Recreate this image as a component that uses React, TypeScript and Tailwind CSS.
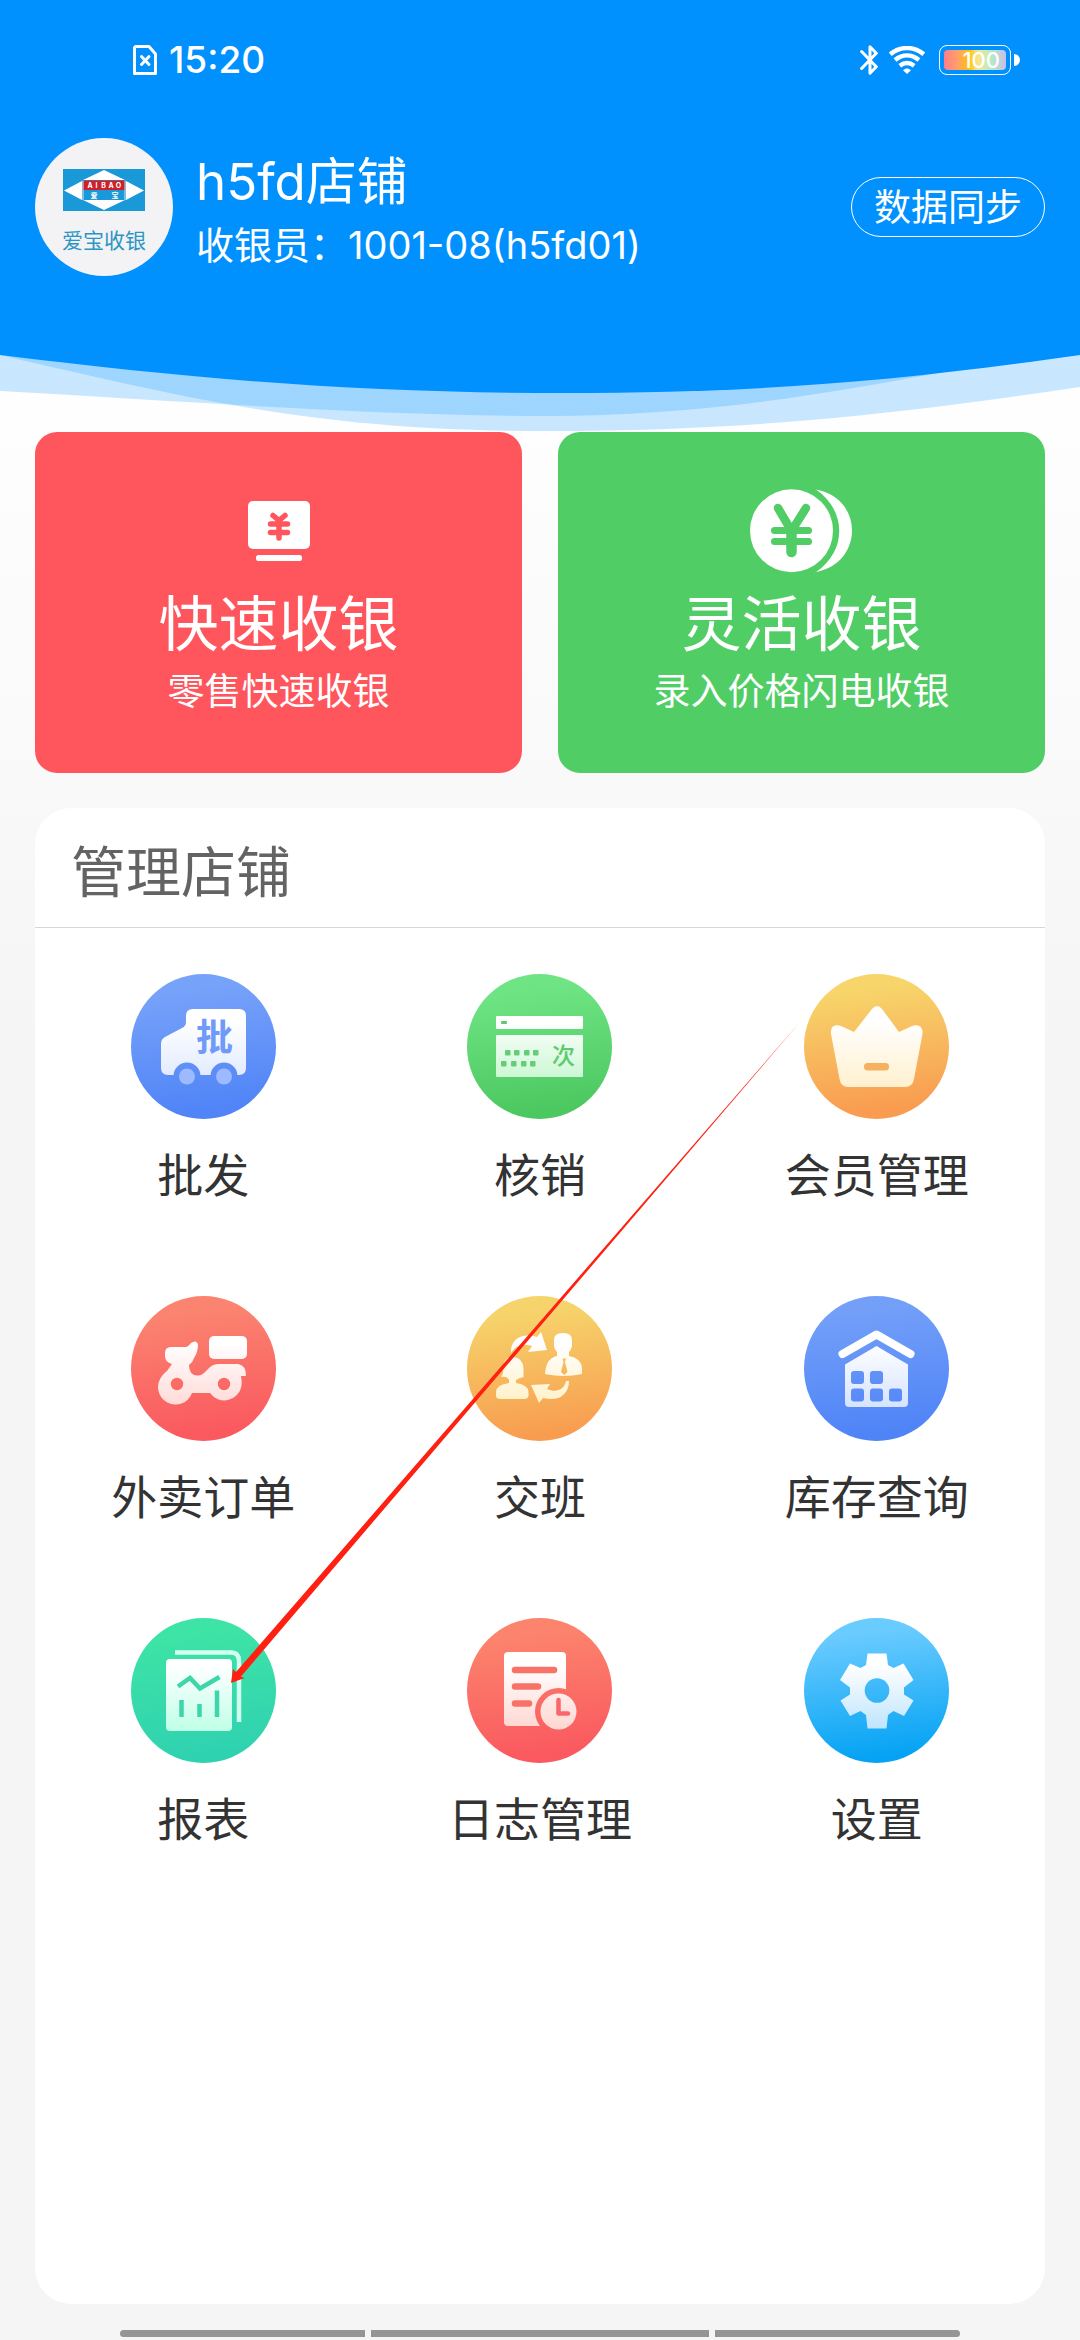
import React, { useId } from "react";

function SimIcon() {
  return (
    <svg viewBox="0 0 24 30" className="h-[30px] w-6" fill="none" stroke="#fff" strokeWidth="3" aria-hidden="true">
      <path d="M2.5 1.5H16L22.5 9V28.5H1.5V2.5Z" strokeLinejoin="round" />
      <path d="M8.5 11.5L16 19.500M16 11.500L8.500 19.500" strokeLinecap="round" />
    </svg>
  );
}

function BluetoothIcon() {
  return (
    <svg viewBox="0 0 18 30" className="h-[30px] w-[18px]" fill="none" stroke="#fff" strokeWidth="3" strokeLinejoin="round" strokeLinecap="round" aria-hidden="true">
      <path d="M1.600 6.500L16.300 21.800L10 28.200V1.800L16.300 8.200L1.600 23.500" />
    </svg>
  );
}

function WifiIcon() {
  return (
    <svg viewBox="0 0 36 28" className="h-7 w-9" fill="none" stroke="#fff" strokeWidth="4.500" aria-hidden="true">
      <path d="M1.200 8.200C11 0 25 0 34.800 8.200" />
      <path d="M6 14C13.500 8 22.500 8 30 14" />
      <path d="M10.800 19.700C15.500 16.200 20.500 16.200 25.200 19.700" />
      <path d="M14 24.200C16.500 22 19.500 22 22 24.200L18 28Z" fill="#fff" stroke="none" />
    </svg>
  );
}

function Battery() {
  return (
    <div className="flex items-center gap-[3px]">
      <div className="h-[30px] w-[72px] rounded-lg border border-white p-1">
        <div className="flex h-full items-center justify-end rounded-sm bg-[linear-gradient(90deg,#ff7d88_0%,#ffa06a_22%,#ffc107_40%,#fbe58a_55%,#b5ecc4_75%,#cbbdea_100%)] pr-1.5 text-[22px] leading-5 font-medium text-white">
          100
        </div>
      </div>
      <div className="h-3 w-[6px] rounded-r-full bg-white" />
    </div>
  );
}

function StoreLogo() {
  return (
    <svg viewBox="0 0 82 42" className="h-[42px] w-[82px]" aria-hidden="true">
      <rect width="82" height="42" fill="#1a98d8" />
      <path d="M41 1L62 11H20ZM41 41L62 31H20ZM1 21.500L19 12V31ZM81 21.500L63 12V31Z" fill="#fff" />
      <rect x="20" y="11.500" width="42" height="9.500" fill="#cf1f28" />
      <path d="M20 11.500V31M62 11.500V31" stroke="#fff" strokeWidth="0.800" />
      <g fill="#fff" fontWeight="700" fontSize="7" textAnchor="middle">
        <text x="27" y="18.700">A</text>
        <text x="33.500" y="18.700">I</text>
        <text x="40.500" y="18.700">B</text>
        <text x="48" y="18.700">A</text>
        <text x="55.500" y="18.700">O</text>
        <text x="31" y="28.800">爱</text>
        <text x="52" y="28.800">宝</text>
      </g>
    </svg>
  );
}

function HeaderWave() {
  return (
    <svg viewBox="0 0 1080 77" preserveAspectRatio="none" className="block h-[77px] w-full" aria-hidden="true">
      <path d="M0 0V36C180 46 380 61 545 61C700 61 820 40 960 14L1080 0Z" fill="#0091ff" fillOpacity="0.210" />
      <path d="M0 0C200 46 320 76 550 76C760 76 920 56 1080 32V0Z" fill="#0091ff" fillOpacity="0.210" />
      <path d="M0 0C210 26 370 38 565 38C760 38 900 26 1080 0Z" fill="#0091ff" />
    </svg>
  );
}

function MonitorYenIcon() {
  return (
    <svg viewBox="0 0 104 84" className="h-[84px] w-[104px]" aria-hidden="true">
      <rect x="21" y="12" width="62" height="48" rx="5" fill="#fff" />
      <rect x="29" y="66" width="46" height="6" rx="2.500" fill="#fff" />
      <path d="M46 26.500L52 31.500L58 26.500M43.500 35H60.500M43.500 43.500H60.500M52 33V49" fill="none" stroke="#ff565d" strokeWidth="5.500" strokeLinecap="round" strokeLinejoin="round" />
    </svg>
  );
}

function CoinsYenIcon() {
  return (
    <svg viewBox="0 0 104 84" className="h-[84px] w-[104px]" aria-hidden="true">
      <path d="M66 0.500C114 9 114 74 66 83C97 62 97 22 66 0.500Z" fill="#fff" />
      <circle cx="41.500" cy="41.750" r="41.500" fill="#fff" />
      <g fill="none" stroke="#50cd65" strokeLinecap="round">
        <path d="M28 19L41.500 42L56 19" strokeWidth="8.500" />
        <path d="M41.500 42V63" strokeWidth="10.500" />
        <path d="M24.500 41.500H58.500M24.500 52.500H58.500" strokeWidth="7" />
      </g>
    </svg>
  );
}

function Disc({
  from,
  to,
  tint,
  children,
}: {
  from: string;
  to: string;
  tint: string;
  children: (fill: string, ground: string) => React.ReactNode;
}) {
  const id = useId().replace(/[^a-zA-Z0-9]/g, "");
  return (
    <svg viewBox="0 0 145 145" className="size-[145px]" aria-hidden="true">
      <defs>
        <linearGradient id={`g${id}`} gradientUnits="userSpaceOnUse" x1="60" y1="0" x2="78" y2="145">
          <stop offset="0.100" stopColor={from} />
          <stop offset="0.950" stopColor={to} />
        </linearGradient>
        <linearGradient id={`w${id}`} gradientUnits="userSpaceOnUse" x1="0" y1="40" x2="0" y2="112">
          <stop offset="0.100" stopColor="#fff" />
          <stop offset="1" stopColor={tint} />
        </linearGradient>
      </defs>
      <circle cx="72.500" cy="72.500" r="72.500" fill={`url(#g${id})`} />
      {children(`url(#w${id})`, `url(#g${id})`)}
    </svg>
  );
}

function WholesaleIcon() {
  return (
    <Disc from="#77a2fa" to="#5084f7" tint="#dce7ff">
      {(fill, ground) => (
        <>
          <path d="M62 35H108Q115 35 115 42V94Q115 101 108 101H37Q30 101 30 94V70Q30 65 34 63L51 54Q55 52 55 48V42Q55 35 62 35Z" fill={fill} />
          <circle cx="56" cy="102" r="13.500" fill={ground} />
          <circle cx="93" cy="102" r="13.500" fill={ground} />
          <circle cx="56" cy="102.500" r="8" fill="#9dbaff" />
          <circle cx="93" cy="102.500" r="8" fill="#9dbaff" />
          <text x="83.500" y="77" fontSize="37" fontWeight="700" textAnchor="middle" fill="#6f9af8">批</text>
        </>
      )}
    </Disc>
  );
}

function VerifyIcon() {
  return (
    <Disc from="#6fe484" to="#4cc860" tint="#c4f6cd">
      {(fill) => (
        <>
          <rect x="29" y="42" width="87" height="13" rx="1" fill={fill} />
          <rect x="34" y="47" width="6" height="3" rx="1" fill="#5ccb70" />
          <rect x="29" y="61" width="87" height="42" rx="1" fill={fill} />
          <g fill="#65cd77">
            {[38, 47, 57, 66].map((x) => (
              <rect key={x} x={x} y="76" width="5.500" height="5.500" rx="1" />
            ))}
            {[34, 44, 54, 63].map((x) => (
              <rect key={x} x={x} y="87" width="5.500" height="5.500" rx="1" />
            ))}
          </g>
          <text x="96.500" y="90" fontSize="23" fontWeight="500" textAnchor="middle" fill="#5fca72">次</text>
        </>
      )}
    </Disc>
  );
}

function MemberIcon() {
  return (
    <Disc from="#f7d56b" to="#f99b50" tint="#fff1cf">
      {(fill) => (
        <>
          <path d="M68 35Q73 29 78 35L95 58L108 52Q119 49 118.500 60L110 105Q108.500 113 101 113H44Q37 113 35.500 105L27 60Q26 49 37 52L50 58Z" fill={fill} />
          <rect x="60" y="89" width="25" height="7.500" rx="3.500" fill="#f5b15f" />
        </>
      )}
    </Disc>
  );
}

function DeliveryIcon() {
  return (
    <Disc from="#fb8470" to="#fa595f" tint="#ffd9d6">
      {(fill, ground) => (
        <>
          <rect x="78" y="40" width="38" height="23" rx="5" fill={fill} />
          <path d="M40 51H55Q58 50 60 47Q66 43 67 49Q67 56 63 62Q62 66 58 69Q58 79 66 79.500Q71 80 76 74Q81 68 87 68H107Q115 69 115 80H110Q111 84 110.500 90A17.500 17.500 0 0 1 79 97H61A17.500 17.500 0 1 1 31 80Q33 77 36 75L41 68Q34 66 34 60V57Q34 51 40 51Z" fill={fill} />
          <circle cx="46" cy="88" r="6.200" fill={ground} />
          <circle cx="93" cy="88" r="6.200" fill={ground} />
        </>
      )}
    </Disc>
  );
}

function ShiftIcon() {
  return (
    <Disc from="#f6d46b" to="#f89d50" tint="#fff0c4">
      {(fill, ground) => (
        <>
          <path d="M44 57C43 44 54 36 70 41L74 36L80 54L61 56L65 50C56 47 49 49 44 57Z" fill={fill} />
          <path d="M87 44Q87 37 96 37Q105 37 105 44V50Q104 54 102 56V60Q114 62 115 72V78Q97 82 78 78Q79 62 90 60V56Q87 53 87 49Z" fill={fill} />
          <path d="M95.500 62.500H99L98 66L100.500 76L97.200 79L94 76L96.500 66Z" fill={ground} />
          <path d="M46 61Q57 62 56.500 74V81Q52 82 49 84V87Q61.500 89 61.500 96V100Q61 103 57 103H34Q29 103 29 100V96Q29 89 42 87V84Q40 80 34 81Q37 78 36 72Q37 61 46 61Z" fill={fill} />
          <path d="M64 89L83 88L80 93C89 97 97 94 99 85L102 85C102 99 91 106 76 102L72 107Z" fill={fill} />
        </>
      )}
    </Disc>
  );
}

function StockIcon() {
  return (
    <Disc from="#739ff9" to="#4f84f7" tint="#d5e3ff">
      {(fill, ground) => (
        <>
          <path d="M38.500 58L72.500 38.500L106.500 58" fill="none" stroke="#fff" strokeWidth="8" strokeLinecap="round" strokeLinejoin="round" />
          <path d="M41 68.500L70 51.500Q72.500 49 75 51.500L104 68.500V107Q104 111 100 111H45Q41 111 41 107Z" fill={fill} />
          <g fill={ground}>
            <rect x="47" y="75" width="13" height="13" rx="3" />
            <rect x="66" y="75" width="13" height="13" rx="3" />
            <rect x="47" y="92.500" width="13" height="13" rx="3" />
            <rect x="66" y="92.500" width="13" height="13" rx="3" />
            <rect x="85" y="92.500" width="13" height="13" rx="3" />
          </g>
        </>
      )}
    </Disc>
  );
}

function ReportIcon() {
  return (
    <Disc from="#3ee3a6" to="#2fd2b0" tint="#c0ffe8">
      {(fill) => (
        <>
          <path d="M44 34.500H101Q108 35 108 43V104" fill="none" stroke="#d2fff0" strokeWidth="4.500" />
          <rect x="35" y="41" width="66" height="72" rx="4" fill={fill} />
          <g fill="none" stroke="#3dd6aa" strokeWidth="4.500">
            <path d="M47 68.500L59 60L69 70.500L88.500 59" />
            <path d="M50.500 82V99M68.500 86V99M86 72.500V99" />
          </g>
        </>
      )}
    </Disc>
  );
}

function LogIcon() {
  return (
    <Disc from="#fc846d" to="#fa595f" tint="#ffd6d0">
      {(fill, ground) => (
        <>
          <rect x="37" y="34" width="62" height="74" rx="4" fill={fill} />
          <path d="M48 52H87M48 68.500H71M48 85.500H62" stroke="#f97268" strokeWidth="6.500" strokeLinecap="round" />
          <circle cx="91.500" cy="93.500" r="23.500" fill={ground} />
          <circle cx="91.500" cy="93.500" r="18" fill={fill} />
          <path d="M91.500 82V95.500H101" fill="none" stroke="#f9676a" strokeWidth="4.500" strokeLinecap="round" strokeLinejoin="round" />
        </>
      )}
    </Disc>
  );
}

function SettingsIcon() {
  return (
    <Disc from="#6acbff" to="#06a3f4" tint="#bde4fd">
      {(fill, ground) => (
        <>
          <path
            d="M63.500 35.500H82.500L84 47L89.500 50L99.500 45.500L109.500 62L100 69.500V76.500L109.500 82.500L100 98L89.500 93L84 97L82.500 110.500H63.500L62 97L56.500 93L46 98L36.500 82.500L46 76.500V69.500L36 62L46 45.500L56.500 50L62 47Z"
            fill={fill}
          />
          <circle cx="73" cy="72.500" r="12.300" fill={ground} />
        </>
      )}
    </Disc>
  );
}

const features: { label: string; Icon: React.ComponentType }[] = [
  { label: "批发", Icon: WholesaleIcon },
  { label: "核销", Icon: VerifyIcon },
  { label: "会员管理", Icon: MemberIcon },
  { label: "外卖订单", Icon: DeliveryIcon },
  { label: "交班", Icon: ShiftIcon },
  { label: "库存查询", Icon: StockIcon },
  { label: "报表", Icon: ReportIcon },
  { label: "日志管理", Icon: LogIcon },
  { label: "设置", Icon: SettingsIcon },
];

function PointerArrow() {
  return (
    <svg viewBox="0 0 1080 2340" className="pointer-events-none absolute top-0 left-0 w-full" aria-hidden="true">
      <path d="M800 1022L241 1676.500L244.500 1678L231 1683L233 1669L236 1672Z" fill="#ff2012" />
    </svg>
  );
}

export default function App() {
  return (
    <div className="relative flex min-h-screen flex-col bg-linear-to-b from-white from-15% to-[#f5f5f5] to-45% font-['Inter','Noto_Sans_CJK_SC',sans-serif]">
      <header className="text-white">
        <div className="bg-[#0091ff] pb-[79px]">
          <div className="flex h-[120px] items-center justify-between pr-[60px] pl-[133px]">
            <div className="flex items-center gap-3">
              <SimIcon />
              <time className="text-[37px] leading-10 font-medium">15:20</time>
            </div>
            <div className="flex items-center">
              <BluetoothIcon />
              <span className="mr-3.5 ml-[11px]">
                <WifiIcon />
              </span>
              <Battery />
            </div>
          </div>
          <div className="mt-[18px] flex items-center px-[35px]">
            <div className="flex size-[138px] flex-col items-center rounded-full bg-[#f3f2f4] pt-[31px]">
              <StoreLogo />
              <span className="mt-4 text-[21px] leading-7 text-[#2b96c6]">爱宝收银</span>
            </div>
            <div className="flex-1 pt-3 pl-[23px]">
              <h1 className="text-[51px] leading-[64px] font-normal">h5fd店铺</h1>
              <p className="text-[38px] leading-[62px]">收银员：1001-08(h5fd01)</p>
            </div>
            <button type="button" className="h-[60px] rounded-full border border-white px-[22px] text-[37px] leading-none">
              数据同步
            </button>
          </div>
        </div>
        <HeaderWave />
      </header>

      <main className="flex flex-1 flex-col px-[35px] pb-9">
        <div className="grid grid-cols-2 gap-9 text-white">
          <button type="button" className="flex flex-col items-center rounded-[22px] bg-[#ff565d] py-[57px]">
            <MonitorYenIcon />
            <span className="mt-[15px] text-[60px] leading-[72px]">快速收银</span>
            <span className="mt-2 text-[37px] leading-[48px]">零售快速收银</span>
          </button>
          <button type="button" className="flex flex-col items-center rounded-[22px] bg-[#50cd65] py-[57px]">
            <CoinsYenIcon />
            <span className="mt-[15px] text-[60px] leading-[72px]">灵活收银</span>
            <span className="mt-2 text-[37px] leading-[48px]">录入价格闪电收银</span>
          </button>
        </div>

        <section className="mt-[35px] flex-1 rounded-[36px] bg-white">
          <h2 className="flex h-[120px] items-center border-b border-[#d8d8d8] px-9 pt-2.5 text-[55px] leading-none font-normal text-[#636363]">
            管理店铺
          </h2>
          <nav className="grid grid-cols-3 gap-y-[91px] pt-[46px]">
            {features.map(({ label, Icon }) => (
              <button key={label} type="button" className="flex flex-col items-center">
                <Icon />
                <span className="mt-[26px] text-[46px] leading-[60px] text-[#333]">{label}</span>
              </button>
            ))}
          </nav>
        </section>
      </main>

      <div className="absolute inset-x-0 bottom-[3px] flex h-[7px] justify-center gap-1.5 px-[120px]" aria-hidden="true">
        <span className="flex-[245] rounded-l-full bg-[#959595]" />
        <span className="flex-[338] bg-[#959595]" />
        <span className="flex-[245] rounded-r-full bg-[#959595]" />
      </div>

      <PointerArrow />
    </div>
  );
}
